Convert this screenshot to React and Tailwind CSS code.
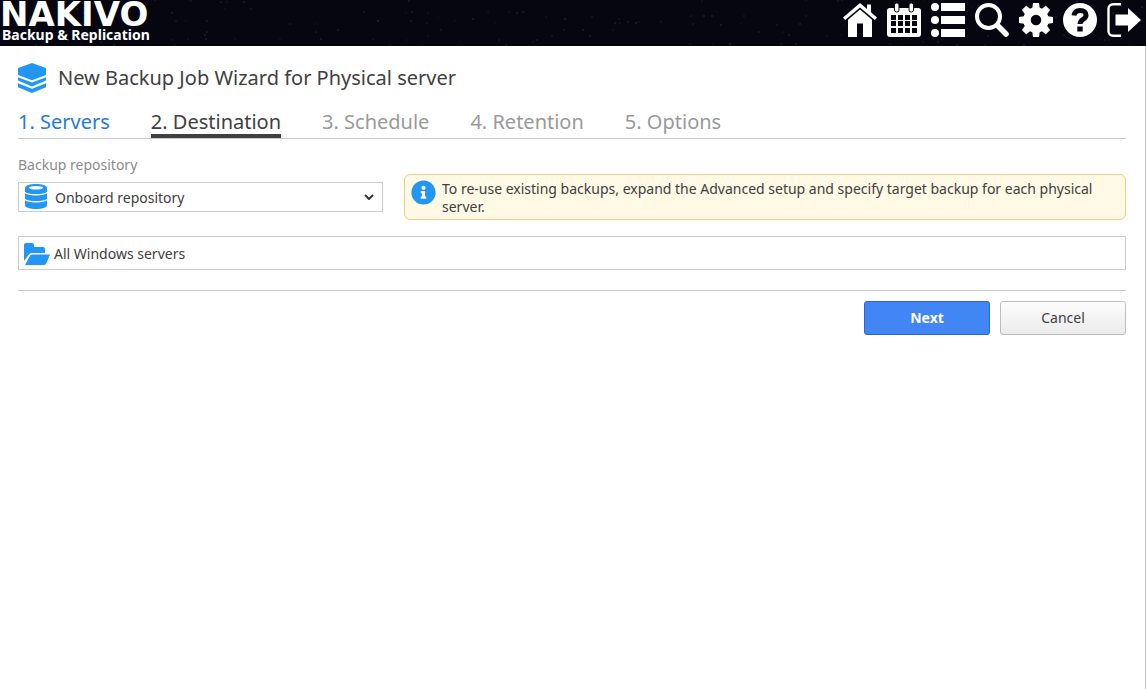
import { useState } from 'react'
import { FaInfoCircle } from 'react-icons/fa'

const TABS = [
  { id: 'servers', label: '1. Servers', state: 'done' },
  { id: 'destination', label: '2. Destination', state: 'active' },
  { id: 'schedule', label: '3. Schedule', state: 'pending' },
  { id: 'retention', label: '4. Retention', state: 'pending' },
  { id: 'options', label: '5. Options', state: 'pending' }
]

const TAB_STYLES = {
  done: 'border-transparent text-[#1c7be0]',
  active: 'border-[#404040] text-[#404040]',
  pending: 'border-transparent text-[#999999]'
}

// Faint specks spread over the top bar
const STARS = Array.from({ length: 260 }, (_, i) => ({
  x: (i * 397 + ((i * i * 31) % 211)) % 1920,
  y: (i * 29 + ((i * i * 7) % 23)) % 46,
  o: 0.1 + ((i * 13) % 10) / 40
}))

const HomeIcon = () => (
  <svg viewBox="0 0 34 34" className="size-[34px]" fill="currentColor">
    <path d="M17 0 0 14.500l2.200 2.400L17 4.400l14.800 12.500L34 14.500l-6-5.200V1.500h-4v4.400z" />
    <path d="M17 6.500 5 16.700V34h9V20.500h6V34h9V16.700z" />
  </svg>
)

const CalendarIcon = () => (
  <svg viewBox="0 0 34 34" className="size-[34px]" fill="currentColor">
    <path
      fillRule="evenodd"
      d="M3 5h28a3 3 0 0 1 3 3v23a3 3 0 0 1-3 3H3a3 3 0 0 1-3-3V8a3 3 0 0 1 3-3zM4 12v5h5v-5zm7 0v5h5v-5zm7 0v5h5v-5zm7 0v5h5v-5zM4 18v5h5v-5zm7 0v5h5v-5zm7 0v5h5v-5zm7 0v5h5v-5zM4 25v5h5v-5zm7 0v5h5v-5zm7 0v5h5v-5zm7 0v5h5v-5z"
    />
    <g stroke="#05060f" strokeWidth="1">
      <rect x="7.500" y="0" width="4.500" height="9" rx="2" />
      <rect x="22" y="0" width="4.500" height="9" rx="2" />
    </g>
  </svg>
)

const ListIcon = () => (
  <svg viewBox="0 0 34 34" className="size-[34px]" fill="currentColor">
    <circle cx="4" cy="4" r="4" />
    <circle cx="4" cy="17" r="4" />
    <circle cx="4" cy="30" r="4" />
    <path d="M10 0h24v8H10zM10 13h24v8H10zM10 26h24v8H10z" />
  </svg>
)

const SearchIcon = () => (
  <svg viewBox="0 0 34 34" className="size-[34px]" fill="none" stroke="currentColor">
    <circle cx="13.500" cy="13.500" r="11.500" strokeWidth="4" />
    <path d="m23 23 8 8" strokeWidth="5.500" strokeLinecap="round" />
  </svg>
)

const GearIcon = () => (
  <svg viewBox="0 0 34 34" className="size-[34px]" fill="none" stroke="currentColor">
    <circle cx="17" cy="17" r="9" strokeWidth="7.500" />
    <g fill="currentColor" stroke="none">
      {[0, 45, 90, 135, 180, 225, 270, 315].map((angle) => (
        <path key={angle} d="M14 0h6l1 7h-8z" transform={`rotate(${angle} 17 17)`} />
      ))}
    </g>
  </svg>
)

const HelpIcon = () => (
  <svg viewBox="0 0 34 34" className="size-[34px]">
    <circle cx="17" cy="17" r="17" fill="currentColor" />
    <path d="M11 12.500c.5-3.500 3-5 6.200-5 3.500 0 5.800 1.800 5.800 4.700 0 4.200-6 4-6 8.800" fill="none" stroke="#05060f" strokeWidth="5" />
    <path d="M14.300 23.500h5.400v5h-5.400z" fill="#05060f" />
  </svg>
)

const LogoutIcon = () => (
  <svg viewBox="0 0 34 34" className="size-[34px]" fill="currentColor">
    <path d="M14 1.200H6a4.500 4.500 0 0 0-4.500 4.500v22.600A4.500 4.500 0 0 0 6 32.800h8" fill="none" stroke="currentColor" strokeWidth="2.400" />
    <path d="M8.500 11.500H21V5l13 12-13 12v-6.500H8.500z" />
  </svg>
)

const StackIcon = () => (
  <svg viewBox="0 0 28 30" className="h-[30px] w-7 shrink-0" fill="#2196f3">
    <path d="M14 0 28 5v7L14 17.200 0 12V5z" />
    <path d="M0 14.200 14 19.600l14-5.400v3.400L14 23.400 0 17.600z" />
    <path d="M0 20.300 14 25.700l14-5.400v4L14 30 0 24.300z" />
  </svg>
)

const DatabaseIcon = () => (
  <svg viewBox="0 0 22 25" className="h-[25px] w-[22px]">
    <path d="M0 4c0-5.300 22-5.300 22 0v17c0 5.300-22 5.300-22 0z" fill="#2196f3" />
    <ellipse cx="11" cy="3.800" rx="7" ry="1.800" fill="#ffffff" />
    <path d="M0 8.500c3 3 19 3 22 0M0 15.500c3 3 19 3 22 0" fill="none" stroke="#ffffff" strokeWidth="1.300" />
  </svg>
)

const FolderIcon = () => (
  <svg viewBox="0 0 26 22" className="h-[22px] w-[26px] shrink-0" fill="#2196f3">
    <path d="M0 18V2a2 2 0 0 1 2-2h6a2 2 0 0 1 2 2v2h9a2 2 0 0 1 2 2v4H8a4 4 0 0 0-3.500 2z" />
    <path d="M8.500 11.500H26l-3.500 8.500a3 3 0 0 1-2.700 2H1l4.700-8.800a3 3 0 0 1 2.800-1.700z" />
  </svg>
)

const NAV_ITEMS = [
  { label: 'Home', Icon: HomeIcon },
  { label: 'Calendar', Icon: CalendarIcon },
  { label: 'Activities', Icon: ListIcon },
  { label: 'Search', Icon: SearchIcon },
  { label: 'Settings', Icon: GearIcon },
  { label: 'Help', Icon: HelpIcon },
  { label: 'Log out', Icon: LogoutIcon }
]

const TopBar = () => (
  <header className="relative flex h-[46px] justify-between overflow-hidden bg-[#05060f] text-white">
    <svg className="absolute inset-0 h-full w-[1920px] max-w-none" fill="#9fb4d8" aria-hidden="true">
      {STARS.map((star, i) => (
        <circle key={i} cx={star.x} cy={star.y} r="0.7" opacity={star.o} />
      ))}
    </svg>
    <a href="#home" className="relative font-bold whitespace-nowrap">
      <span className="block font-[family-name:'DejaVu_Sans',sans-serif] text-[34px] leading-7">NAKIVO</span>
      <span className="block pl-0.5 font-[family-name:'Noto_Sans',sans-serif] text-sm leading-[14px]">Backup &amp; Replication</span>
    </a>
    <nav className="relative flex gap-2.5 pt-[3px] pr-[5px]">
      {NAV_ITEMS.map(({ label, Icon }) => (
        <button key={label} type="button" aria-label={label} className="size-[34px] cursor-pointer">
          <Icon />
        </button>
      ))}
    </nav>
  </header>
)

const App = () => {
  const [repository, setRepository] = useState('onboard')

  return (
    <div className="flex min-h-screen flex-col bg-white font-[family-name:'Noto_Sans',sans-serif] text-sm text-[#404040]">
      <TopBar />

      <main className="flex-1 border-r border-[#c8c8c8] pt-4 pr-[19px] pl-[18px]">
        <div className="flex items-center gap-3">
          <StackIcon />
          <h1 className="text-xl leading-8">New Backup Job Wizard for Physical server</h1>
        </div>

        {/* Wizard steps */}
        <nav className="mt-4 flex gap-[41px] border-b border-[#cccccc]">
          {TABS.map((tab) => (
            <a
              key={tab.id}
              href={`#${tab.id}`}
              aria-current={tab.state === 'active' ? 'step' : undefined}
              className={`border-b-4 text-xl leading-6 ${TAB_STYLES[tab.state]}`}
            >
              {tab.label}
            </a>
          ))}
        </nav>

        {/* Repository */}
        <div className="mt-4 flex gap-[21px]">
          <div className="w-[365px] shrink-0">
            <label htmlFor="repository" className="block leading-5 text-[#8c8c8c]">Backup repository</label>
            <div className="relative mt-[7px]">
              <select
                id="repository"
                value={repository}
                onChange={(e) => setRepository(e.target.value)}
                className="block h-[30px] w-full appearance-none border border-[#cccccc] bg-white pt-0.5 pr-8 pl-9"
              >
                <option value="onboard">Onboard repository</option>
              </select>
              <span className="pointer-events-none absolute top-0.5 left-[7px]">
                <DatabaseIcon />
              </span>
              <svg viewBox="0 0 10 6" className="pointer-events-none absolute top-3 right-[9px] h-1.5 w-2.5" fill="none" stroke="#333333" strokeWidth="2">
                <path d="m1 1 4 4 4-4" />
              </svg>
            </div>
          </div>

          <div className="mt-[19px] flex min-h-[46px] flex-1 gap-1.5 rounded-md border border-[#f0cd84] bg-[#fff9e6] pt-[5px] pr-8 pb-[3px] pl-1.5">
            <FaInfoCircle className="size-[25px] shrink-0 text-[#2196f3]" />
            <p className="leading-[18px]">
              To re-use existing backups, expand the Advanced setup and specify target backup for each physical server.
            </p>
          </div>
        </div>

        <div className="mt-4 flex h-[34px] items-center gap-1 border border-[#cccccc] px-[5px] pt-0.5">
          <FolderIcon />
          <span>All Windows servers</span>
        </div>

        <div className="mt-5 flex justify-end gap-2.5 border-t border-[#cccccc] pt-2.5">
          <button type="button" className="h-[34px] w-[126px] cursor-pointer rounded-[3px] border border-[#2f65cf] bg-[#4285f4] font-bold text-white">
            Next
          </button>
          <button type="button" className="h-[34px] w-[126px] cursor-pointer rounded-[3px] border border-[#bdbdbd] bg-linear-to-b from-[#fdfdfd] to-[#ebebeb]">
            Cancel
          </button>
        </div>
      </main>
    </div>
  )
}

export default App
